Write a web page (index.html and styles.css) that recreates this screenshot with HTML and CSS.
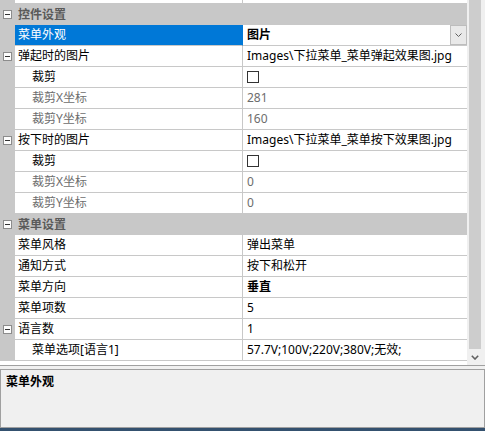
FILE: index.html
```html
<!DOCTYPE html>
<html lang="zh-CN">
<head>
<meta charset="utf-8">
<title>属性</title>
<link rel="stylesheet" href="styles.css">
</head>
<body>
<div class="grid">
  <div class="rows">
    <div class="row partial"><div class="margin"></div><div class="name"></div><div class="value"></div></div>

    <div class="row cat">
      <div class="margin"><svg class="tog" width="9" height="9" viewBox="0 0 9 9"><rect x="0.5" y="0.5" width="8" height="8" fill="#fdfdfd" stroke="#8c8c8c"/><line x1="2" y1="4.5" x2="7" y2="4.5" stroke="#333" stroke-width="1"/></svg></div>
      <div class="cat-label">控件设置</div>
    </div>

    <div class="row sel">
      <div class="margin"></div>
      <div class="name">菜单外观</div>
      <div class="value bold">图片<span class="drop"><svg width="7" height="4" viewBox="0 0 7 4"><path d="M0.5 0.5 L3.5 3.5 L6.5 0.5" fill="none" stroke="#606060" stroke-width="1"/></svg></span></div>
    </div>

    <div class="row">
      <div class="margin"><svg class="tog" width="9" height="9" viewBox="0 0 9 9"><rect x="0.5" y="0.5" width="8" height="8" fill="#fdfdfd" stroke="#8c8c8c"/><line x1="2" y1="4.5" x2="7" y2="4.5" stroke="#333" stroke-width="1"/></svg></div>
      <div class="name">弹起时的图片</div>
      <div class="value">Images\下拉菜单_菜单弹起效果图.jpg</div>
    </div>
    <div class="row">
      <div class="margin"></div>
      <div class="name sub">裁剪</div>
      <div class="value"><span class="check"></span></div>
    </div>
    <div class="row">
      <div class="margin"></div>
      <div class="name sub dim">裁剪X坐标</div>
      <div class="value dim">281</div>
    </div>
    <div class="row">
      <div class="margin"></div>
      <div class="name sub dim">裁剪Y坐标</div>
      <div class="value dim">160</div>
    </div>

    <div class="row">
      <div class="margin"><svg class="tog" width="9" height="9" viewBox="0 0 9 9"><rect x="0.5" y="0.5" width="8" height="8" fill="#fdfdfd" stroke="#8c8c8c"/><line x1="2" y1="4.5" x2="7" y2="4.5" stroke="#333" stroke-width="1"/></svg></div>
      <div class="name">按下时的图片</div>
      <div class="value">Images\下拉菜单_菜单按下效果图.jpg</div>
    </div>
    <div class="row">
      <div class="margin"></div>
      <div class="name sub">裁剪</div>
      <div class="value"><span class="check"></span></div>
    </div>
    <div class="row">
      <div class="margin"></div>
      <div class="name sub dim">裁剪X坐标</div>
      <div class="value dim">0</div>
    </div>
    <div class="row">
      <div class="margin"></div>
      <div class="name sub dim">裁剪Y坐标</div>
      <div class="value dim">0</div>
    </div>

    <div class="row cat">
      <div class="margin"><svg class="tog" width="9" height="9" viewBox="0 0 9 9"><rect x="0.5" y="0.5" width="8" height="8" fill="#fdfdfd" stroke="#8c8c8c"/><line x1="2" y1="4.5" x2="7" y2="4.5" stroke="#333" stroke-width="1"/></svg></div>
      <div class="cat-label">菜单设置</div>
    </div>

    <div class="row">
      <div class="margin"></div>
      <div class="name">菜单风格</div>
      <div class="value">弹出菜单</div>
    </div>
    <div class="row">
      <div class="margin"></div>
      <div class="name">通知方式</div>
      <div class="value">按下和松开</div>
    </div>
    <div class="row">
      <div class="margin"></div>
      <div class="name">菜单方向</div>
      <div class="value bold">垂直</div>
    </div>
    <div class="row">
      <div class="margin"></div>
      <div class="name">菜单项数</div>
      <div class="value">5</div>
    </div>
    <div class="row">
      <div class="margin"><svg class="tog" width="9" height="9" viewBox="0 0 9 9"><rect x="0.5" y="0.5" width="8" height="8" fill="#fdfdfd" stroke="#8c8c8c"/><line x1="2" y1="4.5" x2="7" y2="4.5" stroke="#333" stroke-width="1"/></svg></div>
      <div class="name">语言数</div>
      <div class="value">1</div>
    </div>
    <div class="row">
      <div class="margin"></div>
      <div class="name sub">菜单选项[语言1]</div>
      <div class="value">57.7V;100V;220V;380V;无效;</div>
    </div>
  </div>
  <div class="scrollbar">
    <div class="thumb"></div>
    <div class="arrow"><svg width="8" height="5" viewBox="0 0 8 5"><path d="M0.8 0.8 L4 4 L7.2 0.8" fill="none" stroke="#606060" stroke-width="1.6"/></svg></div>
  </div>
</div>
<div class="gap"></div>
<div class="desc">
  <div class="desc-title">菜单外观</div>
</div>
<div class="taskbar"></div>
</body>
</html>
```
FILE: styles.css
```css
* { box-sizing: border-box; }
html, body {
  margin: 0;
  padding: 0;
}
body {
  width: 485px;
  height: 431px;
  overflow: hidden;
  background: #f0f0f0;
  font-family: "Noto Sans", "Noto Sans CJK SC", sans-serif;
  font-size: 12px;
  color: #000;
}
.grid {
  display: flex;
  height: 366px;
  border-bottom: 1px solid #a0a0a0;
  background: #fff;
}
.rows {
  width: 467px;
  background: #fff;
}
.row {
  display: grid;
  grid-template-columns: 15px 228px 224px;
  height: 21px;
}
.row.partial { height: 4px; }
.margin {
  background: #c8c8c8;
  display: flex;
  align-items: center;
  padding-left: 3px;
}
.tog { display: block; }
.name, .value {
  border-bottom: 1px solid #c8c8c8;
  line-height: 20px;
  white-space: nowrap;
  overflow: hidden;
}
.name {
  border-right: 1px solid #c8c8c8;
  padding-left: 3px;
}
.name.sub { padding-left: 17px; }
.value {
  padding-left: 4px;
  display: flex;
  align-items: center;
}
.dim { color: #6d6d6d; }
.bold { font-weight: bold; }
.row.cat {
  background: #c8c8c8;
  grid-template-columns: 15px 452px;
}
.cat-label {
  line-height: 21px;
  padding-left: 3px;
  font-weight: bold;
  color: #5a5a5a;
}
.row.sel .name {
  background: #0078d7;
  border-right-color: #0078d7;
  color: #fff;
}
.drop {
  margin-left: auto;
  width: 17px;
  height: 20px;
  background: #e9e9e9;
  border: 1px solid #bdbdbd;
  display: flex;
  align-items: center;
  justify-content: center;
}
.drop svg { display: block; }
.check {
  width: 12px;
  height: 12px;
  border: 1px solid #333;
  background: #fff;
  display: block;
}
.scrollbar {
  width: 18px;
  background: #f0f0f0;
  display: flex;
  flex-direction: column;
}
.thumb {
  height: 349px;
  margin: 0 4px 0 2px;
  background: #cdcdcd;
}
.arrow {
  flex: 1;
  display: flex;
  align-items: center;
  justify-content: center;
  padding-right: 2px;
}
.arrow svg { display: block; }
.gap { height: 3px; }
.desc {
  height: 59px;
  width: 485px;
  border: 1px solid #a0a0a0;
  border-right-width: 1px;
  background: #f0f0f0;
  padding: 4px 5px;
}
.desc-title {
  font-weight: bold;
  line-height: 16px;
}
.taskbar {
  height: 3px;
  background: #34516f;
}
```
